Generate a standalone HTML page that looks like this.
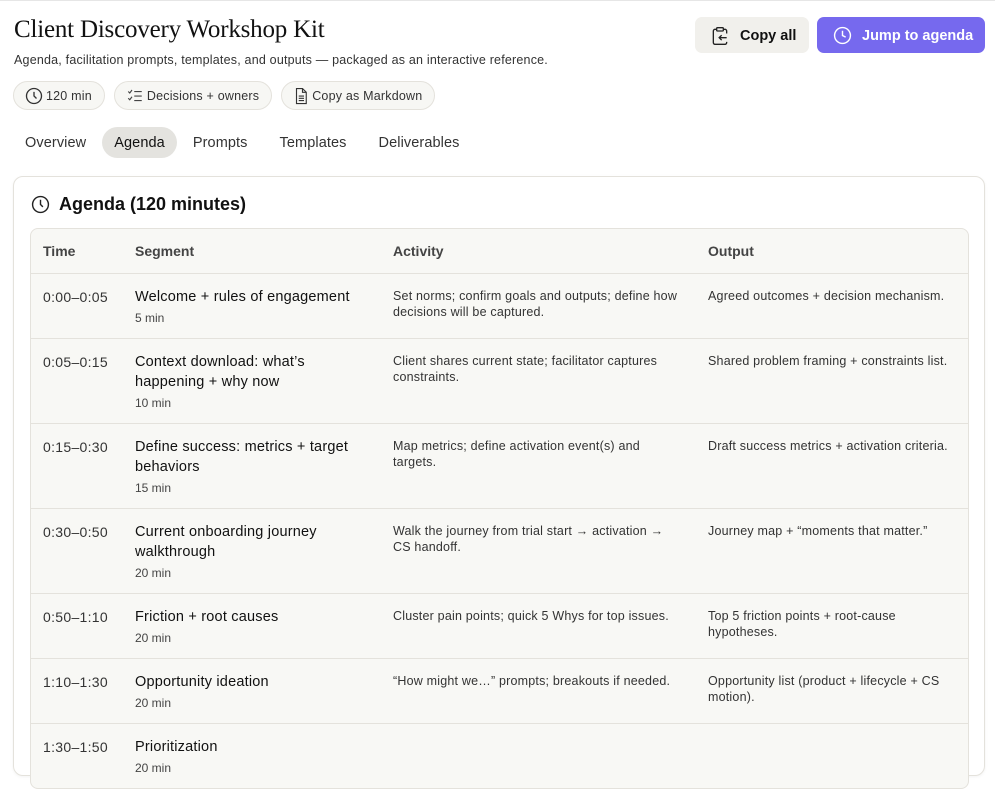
<!DOCTYPE html>
<html><head><meta charset="utf-8"><style>
*{box-sizing:border-box;margin:0;padding:0}
body{width:995px;height:719px;overflow:hidden;background:#fff;font-family:"Liberation Sans",sans-serif;color:#1a1a1a;border-top:1px solid #e6e6e6}
.title{position:absolute;left:14px;top:16px;font-family:"Liberation Serif",serif;font-size:25px;color:#111;letter-spacing:-0.2px}
.sub{position:absolute;left:14px;top:53px;font-size:12.5px;letter-spacing:.2px;color:#333}
.pills{position:absolute;left:13px;top:81px;display:flex;gap:9px}
.pill{height:29px;border:1px solid #e4e2dc;background:#f7f7f4;border-radius:15px;display:flex;align-items:center;gap:2px;padding:0 12px 0 10px;font-size:12.5px;letter-spacing:.2px;color:#333}
.btn{position:absolute;top:17px;height:36px;border-radius:7px;display:flex;align-items:center;gap:10px;font-size:14.5px;font-weight:bold;padding-top:1px}
.tabs{position:absolute;left:13px;top:127px;display:flex;gap:0}
.tab{height:31px;padding:0 12px;border-radius:16px;display:flex;align-items:center;font-size:14.5px;color:#333;margin-right:4px;letter-spacing:.1px}
.tab.on{background:#e4e3df;color:#111}
.card{position:absolute;left:13px;top:176px;width:972px;height:600px;border:1px solid #e4e2dc;border-radius:10px;box-shadow:0 1px 3px rgba(0,0,0,.05)}
.h{position:absolute;left:17px;top:17px;display:flex;align-items:center;gap:9px;font-size:18px;font-weight:bold;color:#111}
.tbl{position:absolute;left:16px;top:51px;width:939px;border:1px solid #e4e2dc;border-radius:8px;background:#f8f8f5;overflow:hidden}
.row{display:flex;border-top:1px solid #e4e2dc}
.row.hd{border-top:none;height:44px;align-items:center;font-weight:bold;font-size:14px;color:#444}
.c1{width:104px;padding-left:12px}
.c2{width:258px;padding-right:30px}
.c3{width:315px;padding-right:20px}
.c4{flex:1;padding-right:14px}
.row:not(.hd){padding:13px 0 11px}
.row:not(.hd) .c1{font-size:14px;letter-spacing:.3px;color:#333;line-height:20px}
.seg{font-size:14.5px;letter-spacing:.2px;line-height:20px;color:#111}
.min{font-size:12px;line-height:18px;color:#444;margin-top:2px}
.act{font-size:12.5px;letter-spacing:.2px;line-height:16px;color:#333;padding-top:1px}
</style></head><body>
<div class="title">Client Discovery Workshop Kit</div>
<div class="sub">Agenda, facilitation prompts, templates, and outputs — packaged as an interactive reference.</div>
<div class="pills">
<div class="pill"><svg width="20" height="20" viewBox="0 0 24 24" fill="none" stroke="#333" stroke-width="1.6"><circle cx="12" cy="12" r="9"/><path d="M12 7v5l3 3"/></svg>120 min</div>
<div class="pill"><svg width="20" height="18" viewBox="0 0 24 24" fill="none" stroke="#444" stroke-width="1.5"><path d="M3 6l2 2 3-4M3 15l2 2 3-4M11 6h10M11 12h10M11 18h10"/></svg>Decisions + owners</div>
<div class="pill"><svg width="18" height="20" viewBox="0 0 24 24" fill="none" stroke="#333" stroke-width="1.5"><path d="M6 2h8l5 5v15H6z"/><path d="M14 2v5h5M9 12h7M9 15h7M9 18h7"/></svg>Copy as Markdown</div>
</div>
<div class="btn" style="left:695px;width:114px;background:#f1f0ec;color:#111;padding-left:15px"><svg width="20" height="22" viewBox="0 0 24 24" fill="none" stroke="#222" stroke-width="1.6"><rect x="8" y="2" width="8" height="4" rx="1"/><path d="M16 4h2a2 2 0 0 1 2 2v3M8 4H6a2 2 0 0 0-2 2v14a2 2 0 0 0 2 2h12a2 2 0 0 0 2-2v-1M20 14h-9M14 11l-3 3 3 3"/></svg>Copy all</div>
<div class="btn" style="left:817px;width:168px;background:#7669ee;color:#fff;padding-left:16px"><svg width="19" height="19" viewBox="0 0 24 24" fill="none" stroke="#fff" stroke-width="1.8"><circle cx="12" cy="12" r="10"/><path d="M12 6v6l4 2"/></svg>Jump to agenda</div>
<div class="tabs">
<div class="tab">Overview</div><div class="tab on">Agenda</div><div class="tab">Prompts</div><div class="tab" style="margin-left:4px">Templates</div><div class="tab" style="margin-left:4px">Deliverables</div>
</div>
<div class="card">
<div class="h"><svg width="19" height="19" viewBox="0 0 24 24" fill="none" stroke="#222" stroke-width="1.8"><circle cx="12" cy="12" r="10"/><path d="M12 6v6l3 3"/></svg>Agenda (120 minutes)</div>
<div class="tbl">
<div class="row hd"><div class="c1">Time</div><div class="c2">Segment</div><div class="c3">Activity</div><div class="c4">Output</div></div>
<div class="row"><div class="c1">0:00–0:05</div><div class="c2"><div class="seg">Welcome + rules of engagement</div><div class="min">5 min</div></div><div class="c3 act">Set norms; confirm goals and outputs; define how decisions will be captured.</div><div class="c4 act">Agreed outcomes + decision mechanism.</div></div>
<div class="row"><div class="c1">0:05–0:15</div><div class="c2"><div class="seg">Context download: what’s happening + why now</div><div class="min">10 min</div></div><div class="c3 act">Client shares current state; facilitator captures constraints.</div><div class="c4 act">Shared problem framing + constraints list.</div></div>
<div class="row"><div class="c1">0:15–0:30</div><div class="c2"><div class="seg">Define success: metrics + target behaviors</div><div class="min">15 min</div></div><div class="c3 act">Map metrics; define activation event(s) and<br>targets.</div><div class="c4 act">Draft success metrics + activation criteria.</div></div>
<div class="row"><div class="c1">0:30–0:50</div><div class="c2"><div class="seg">Current onboarding journey walkthrough</div><div class="min">20 min</div></div><div class="c3 act">Walk the journey from trial start → activation →<br>CS handoff.</div><div class="c4 act">Journey map + “moments that matter.”</div></div>
<div class="row"><div class="c1">0:50–1:10</div><div class="c2"><div class="seg">Friction + root causes</div><div class="min">20 min</div></div><div class="c3 act">Cluster pain points; quick 5 Whys for top issues.</div><div class="c4 act">Top 5 friction points + root-cause hypotheses.</div></div>
<div class="row"><div class="c1">1:10–1:30</div><div class="c2"><div class="seg">Opportunity ideation</div><div class="min">20 min</div></div><div class="c3 act">“How might we…” prompts; breakouts if needed.</div><div class="c4 act">Opportunity list (product + lifecycle + CS motion).</div></div>
<div class="row"><div class="c1">1:30–1:50</div><div class="c2"><div class="seg">Prioritization</div><div class="min">20 min</div></div><div class="c3 act"></div><div class="c4 act"></div></div>
</div>
</div>
</body></html>
